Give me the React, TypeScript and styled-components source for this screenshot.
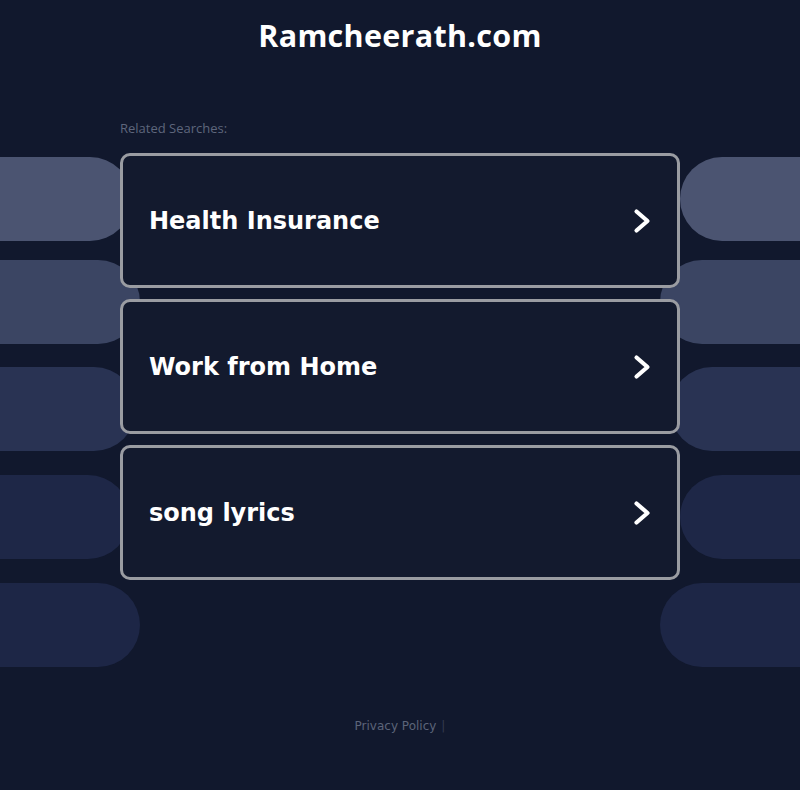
import React from 'react'
import styled, { createGlobalStyle } from 'styled-components'

const GlobalStyle = createGlobalStyle`
  html, body {
    margin: 0;
    padding: 0;
    background: #11182d;
  }
`

const Page = styled.div`
  position: relative;
  min-height: 790px;
  overflow: hidden;
  background: #11182d;
  font-family: 'Open Sans', sans-serif;
`

const Backdrop = styled.div`
  position: absolute;
  top: 157px;
  left: 0;
  right: 0;
  display: flex;
  flex-direction: column;
  pointer-events: none;
`

const PillRow = styled.div<{ $top: number }>`
  height: 84px;
  margin-top: ${props => props.$top}px;
  display: flex;
  justify-content: space-between;
`

type PillProps = {
  $side: 'left' | 'right'
  $width: number
  $color: string
}

const Pill = styled.div<PillProps>`
  width: ${props => props.$width}px;
  height: 100%;
  background: ${props => props.$color};
  border-radius: ${props => (props.$side === 'left' ? '0 42px 42px 0' : '42px 0 0 42px')};
`

const Content = styled.div`
  position: relative;
  z-index: 1;
  display: flex;
  flex-direction: column;
  align-items: center;
`

const Title = styled.h1`
  margin: 0;
  height: 70px;
  line-height: 70px;
  font-family: 'Open Sans', sans-serif;
  font-weight: 700;
  font-size: 30.5px;
  color: #ffffff;
  letter-spacing: 0.3px;
`

const Main = styled.main`
  width: 560px;
  margin-top: 50px;
  display: flex;
  flex-direction: column;
`

const Related = styled.div`
  font-size: 13px;
  line-height: 17px;
  color: #5e667c;
  margin-bottom: 16px;
`

const CardList = styled.div`
  display: flex;
  flex-direction: column;
  gap: 11px;
`

const Card = styled.a`
  box-sizing: border-box;
  height: 135px;
  display: flex;
  align-items: center;
  justify-content: space-between;
  padding: 0 26px 0 26px;
  border: 3px solid #9a9ca2;
  border-radius: 10px;
  background: #131a2e;
  text-decoration: none;
  color: #ffffff;
  font-family: 'DejaVu Sans', sans-serif;
  font-weight: 700;
  font-size: 24px;
`

const Footer = styled.footer`
  margin-top: 138px;
  font-family: 'DejaVu Sans', sans-serif;
  font-size: 12px;
  line-height: 16px;
  color: #5c6479;
  span {
    color: #343a50;
    margin-left: 5px;
  }
`

const Chevron = () => (
  <svg width="18" height="26" viewBox="0 0 18 26">
    <polyline
      points="3.5,3.5 14.5,13 3.5,22.5"
      fill="none"
      stroke="#ffffff"
      strokeWidth="4.2"
      strokeLinecap="round"
      strokeLinejoin="round"
    />
  </svg>
)

const pills = [
  { top: 0, left: 132, right: 120, color: '#4b5471' },
  { top: 19, left: 140, right: 140, color: '#3b4563' },
  { top: 23, left: 136, right: 130, color: '#293353' },
  { top: 24, left: 130, right: 120, color: '#1e2747' },
  { top: 24, left: 140, right: 140, color: '#1d2646' },
]

const searches = ['Health Insurance', 'Work from Home', 'song lyrics']

const App = () => (
  <>
    <GlobalStyle />
    <Page>
      <Backdrop>
        {pills.map((p, i) => (
          <PillRow key={i} $top={p.top}>
            <Pill $side="left" $width={p.left} $color={p.color} />
            <Pill $side="right" $width={p.right} $color={p.color} />
          </PillRow>
        ))}
      </Backdrop>
      <Content>
        <Title>Ramcheerath.com</Title>
        <Main>
          <Related>Related Searches:</Related>
          <CardList>
            {searches.map(item => (
              <Card key={item} href="#">
                {item}
                <Chevron />
              </Card>
            ))}
          </CardList>
        </Main>
        <Footer>
          Privacy Policy<span>|</span>
        </Footer>
      </Content>
    </Page>
  </>
)

export default App
